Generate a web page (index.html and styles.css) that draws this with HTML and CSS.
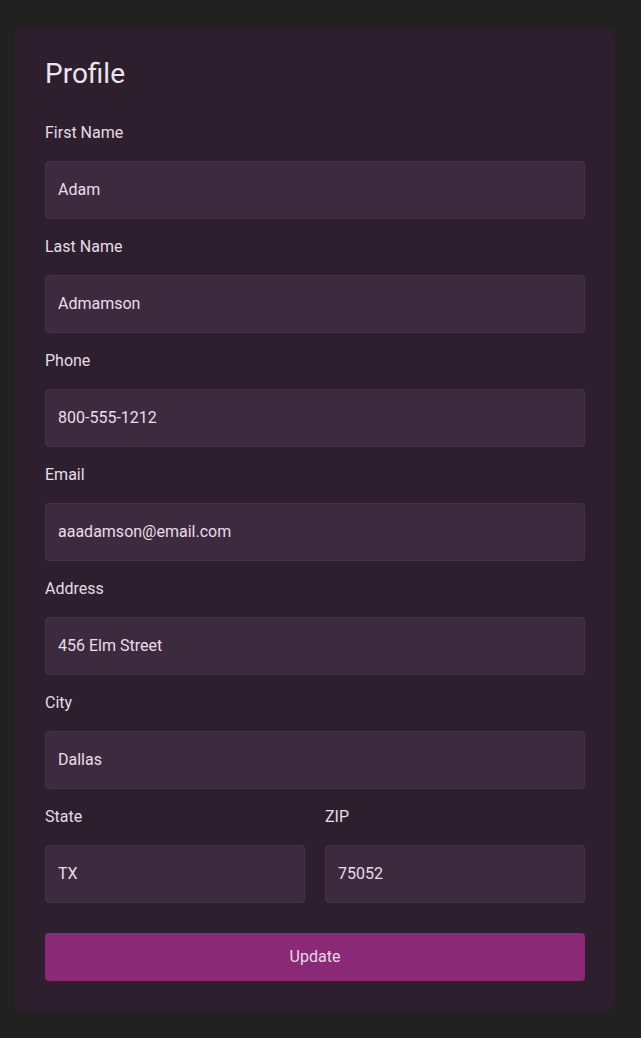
FILE: index.html
```html
<!DOCTYPE html>
<html lang="en">
<head>
<meta charset="utf-8">
<title>Profile</title>
<link rel="stylesheet" href="styles.css">
</head>
<body>
<main class="card">
  <h1 class="title">Profile</h1>
  <form class="form">
    <div class="field">
      <label class="label" for="first">First Name</label>
      <input class="input" id="first" type="text" value="Adam">
    </div>
    <div class="field">
      <label class="label" for="last">Last Name</label>
      <input class="input" id="last" type="text" value="Admamson">
    </div>
    <div class="field">
      <label class="label" for="phone">Phone</label>
      <input class="input" id="phone" type="text" value="800-555-1212">
    </div>
    <div class="field">
      <label class="label" for="email">Email</label>
      <input class="input" id="email" type="text" value="aaadamson@email.com">
    </div>
    <div class="field">
      <label class="label" for="address">Address</label>
      <input class="input" id="address" type="text" value="456 Elm Street">
    </div>
    <div class="field">
      <label class="label" for="city">City</label>
      <input class="input" id="city" type="text" value="Dallas">
    </div>
    <div class="row">
      <div class="field">
        <label class="label" for="state">State</label>
        <input class="input" id="state" type="text" value="TX">
      </div>
      <div class="field">
        <label class="label" for="zip">ZIP</label>
        <input class="input" id="zip" type="text" value="75052">
      </div>
    </div>
    <button class="button" type="button">Update</button>
  </form>
</main>
</body>
</html>
```

FILE: styles.css
```css
* { box-sizing: border-box; }

html, body {
  margin: 0;
  padding: 0;
  background: #212121;
}

body {
  padding: 28px 26px 28px 15px;
  font-family: Roboto, "Liberation Sans", sans-serif;
  color: #e6dce6;
}

.card {
  width: 600px;
  background: #2d1f2e;
  border-radius: 6px;
  padding: 30px 30px 30px 30px;
}

.title {
  margin: -1px 0 29px 0;
  font-size: 28px;
  font-weight: 400;
  line-height: 34px;
  color: #ece4ec;
}

.form {
  display: flex;
  flex-direction: column;
}

.field {
  display: flex;
  flex-direction: column;
  margin-bottom: 15px;
}

.label {
  font-size: 16px;
  line-height: 24px;
  padding-top: 1px;
  margin-bottom: 16px;
  color: #e6dce6;
}

.input {
  height: 58px;
  width: 100%;
  padding: 0 12px 2px 12px;
  background: #3e2a3f;
  border: 1px solid #4b2f4a;
  border-radius: 4px;
  font-family: Roboto, "Liberation Sans", sans-serif;
  font-size: 16px;
  color: #e8dee8;
  outline: none;
}

.row {
  display: grid;
  grid-template-columns: 1fr 1fr;
  gap: 20px;
}

.row .field {
  margin-bottom: 30px;
}

.button {
  height: 48px;
  width: 100%;
  padding: 0 0 1px 0;
  background: #8a2a77;
  border: none;
  border-radius: 4px;
  font-family: Roboto, "Liberation Sans", sans-serif;
  font-size: 16px;
  color: #e8d6e6;
}
```
